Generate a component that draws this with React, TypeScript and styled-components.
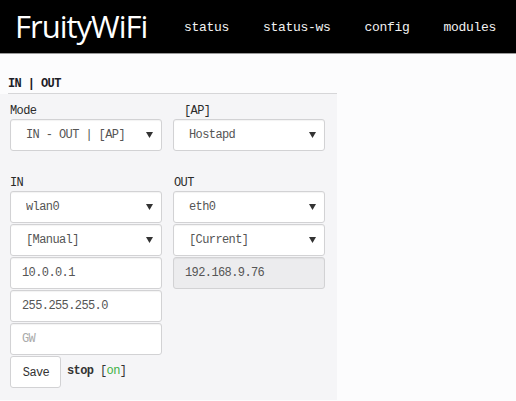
import React from "react";
import styled, { createGlobalStyle } from "styled-components";

const GlobalStyle = createGlobalStyle`
  html, body {
    margin: 0;
    padding: 0;
    background: #fcfcfd;
  }
  body {
    font-family: "Liberation Mono", "DejaVu Sans Mono", monospace;
    height: 401px;
    overflow: hidden;
  }
`;

const arrow =
  "url(\"data:image/svg+xml,%3Csvg xmlns='http://www.w3.org/2000/svg' width='7' height='6'%3E%3Cpath d='M0 0h7L3.5 6z' fill='%23333'/%3E%3C/svg%3E\")";

// header
const StyledHeader = styled.div`
  height: 53px;
  background: #000;
  border-bottom: 1px solid #9a9a9a;
  display: flex;
  align-items: center;
  padding-left: 15px;
`;
const StyledLogo = styled.div`
  font-family: "Open Sans", "Noto Sans", sans-serif;
  font-size: 31px;
  letter-spacing: -1px;
  color: #fff;
  margin-top: -2px;
  width: 152px;
`;
const StyledNav = styled.div`
  display: flex;
  margin-left: 0px;
`;
const StyledNavItem = styled.span`
  font-size: 13px;
  letter-spacing: -0.3px;
  color: #f2f2f2;
  padding: 0 17px;
  margin-top: 1px;
`;

// form
const StyledTitle = styled.div`
  margin: 0 179px 0 8px;
  padding-top: 23px;
  height: 16px;
  border-bottom: 1px solid #d6d6d8;
  font-size: 12px;
  font-weight: bold;
  letter-spacing: -0.6px;
  color: #1e1e28;
`;
const StyledPanel = styled.div`
  width: 337px;
  box-sizing: border-box;
  background: #f5f5f7;
  padding: 9px 0 0 10px;
  height: 306px;
  display: grid;
  grid-template-columns: 152px 152px;
  column-gap: 11px;
  align-content: start;
`;
const StyledCol = styled.div`
  display: flex;
  flex-direction: column;
`;
const StyledLabel = styled.div<{ indent?: number; top?: number }>`
  height: 16px;
  line-height: 16px;
  font-size: 12px;
  letter-spacing: -0.6px;
  color: #2a2a2a;
  padding-left: ${(p) => p.indent ?? 0}px;
  margin-top: ${(p) => p.top ?? 0}px;
`;
const StyledSelect = styled.select`
  appearance: none;
  -webkit-appearance: none;
  height: 32px;
  margin: 0 0 1px;
  box-sizing: border-box;
  border: 1px solid #d2d2d4;
  border-radius: 3px;
  background: #fff ${arrow} no-repeat right 8px center;
  font-family: inherit;
  font-size: 12px;
  letter-spacing: -0.6px;
  color: #555;
  padding: 0 0 0 15px;
  box-shadow: inset 0 1px 1px rgba(0, 0, 0, 0.05);
  outline: none;
`;
const StyledInput = styled.input<{ disabled?: boolean }>`
  height: 32px;
  margin: 0 0 1px;
  box-sizing: border-box;
  border: 1px solid #d2d2d4;
  border-radius: 3px;
  background: ${(p) => (p.disabled ? "#ececee" : "#fff")};
  font-family: inherit;
  font-size: 12px;
  letter-spacing: -0.6px;
  color: #555;
  padding: 0 0 0 11px;
  box-shadow: inset 0 1px 1px rgba(0, 0, 0, 0.05);
  outline: none;
  &::placeholder {
    color: #aaa;
  }
`;
const StyledActions = styled.div`
  display: flex;
  align-items: center;
  gap: 6px;
`;
const StyledButton = styled.button`
  width: 51px;
  height: 32px;
  box-sizing: border-box;
  border: 1px solid #d2d2d4;
  border-radius: 3px;
  background: #fff;
  font-family: inherit;
  font-size: 12px;
  letter-spacing: -0.6px;
  color: #333;
  padding: 2px 0 0 1px;
`;
const StyledStatus = styled.span`
  font-size: 12px;
  letter-spacing: -0.6px;
  color: #333;
  margin-top: -2px;
`;
const StyledOn = styled.span`
  color: #3cb043;
`;

const navItems = ["status", "status-ws", "config", "modules"];

export default function App() {
  return (
    <>
      <GlobalStyle />
      <StyledHeader>
        <StyledLogo>FruityWiFi</StyledLogo>
        <StyledNav>
          {navItems.map((n) => (
            <StyledNavItem key={n}>{n}</StyledNavItem>
          ))}
        </StyledNav>
      </StyledHeader>
      <StyledTitle>IN | OUT</StyledTitle>
      <StyledPanel>
        <StyledCol>
          <StyledLabel>Mode</StyledLabel>
          <StyledSelect defaultValue="io">
            <option value="io">IN - OUT | [AP]</option>
          </StyledSelect>
          <StyledLabel top={23}>IN</StyledLabel>
          <StyledSelect defaultValue="wlan0">
            <option value="wlan0">wlan0</option>
          </StyledSelect>
          <StyledSelect defaultValue="manual">
            <option value="manual">[Manual]</option>
          </StyledSelect>
          <StyledInput defaultValue="10.0.0.1" />
          <StyledInput defaultValue="255.255.255.0" />
          <StyledInput placeholder="GW" />
          <StyledActions>
            <StyledButton>Save</StyledButton>
            <StyledStatus>
              <b>stop</b> [<StyledOn>on</StyledOn>]
            </StyledStatus>
          </StyledActions>
        </StyledCol>
        <StyledCol>
          <StyledLabel indent={11}>[AP]</StyledLabel>
          <StyledSelect defaultValue="hostapd">
            <option value="hostapd">Hostapd</option>
          </StyledSelect>
          <StyledLabel top={23} indent={1}>OUT</StyledLabel>
          <StyledSelect defaultValue="eth0">
            <option value="eth0">eth0</option>
          </StyledSelect>
          <StyledSelect defaultValue="current">
            <option value="current">[Current]</option>
          </StyledSelect>
          <StyledInput disabled defaultValue="192.168.9.76" />
        </StyledCol>
      </StyledPanel>
    </>
  );
}
